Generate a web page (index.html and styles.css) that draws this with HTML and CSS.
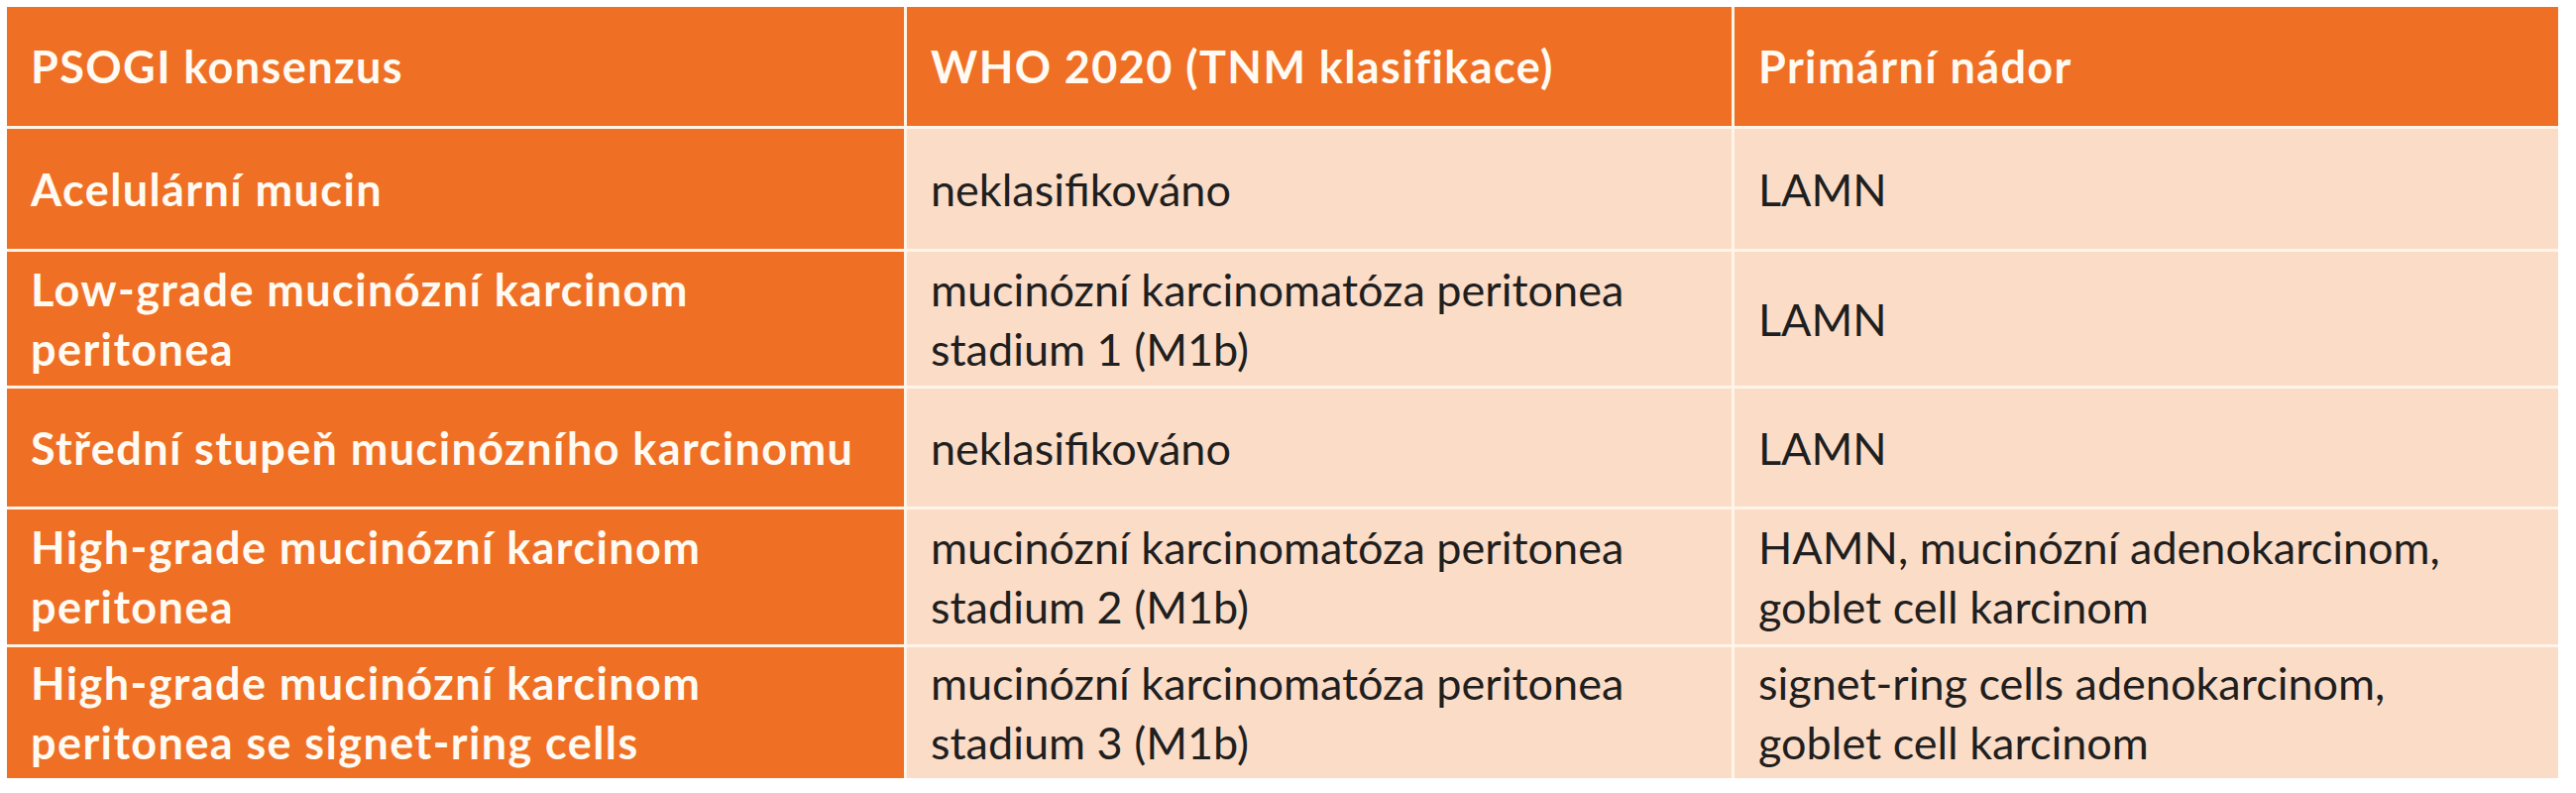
FILE: index.html
```html
<!DOCTYPE html>
<html lang="cs">
<head>
<meta charset="utf-8">
<title>PSOGI konsenzus</title>
<link rel="stylesheet" href="styles.css">
</head>
<body>
<div class="table">
  <div class="cell head">PSOGI konsenzus</div>
  <div class="cell head">WHO 2020 (TNM klasifikace)</div>
  <div class="cell head">Primární nádor</div>

  <div class="cell lead">Acelulární mucin</div>
  <div class="cell body">neklasifikováno</div>
  <div class="cell body">LAMN</div>

  <div class="cell lead">Low-grade mucinózní karcinom<br>peritonea</div>
  <div class="cell body">mucinózní karcinomatóza peritonea<br>stadium 1 (M1b)</div>
  <div class="cell body">LAMN</div>

  <div class="cell lead">Střední stupeň mucinózního karcinomu</div>
  <div class="cell body">neklasifikováno</div>
  <div class="cell body">LAMN</div>

  <div class="cell lead">High-grade mucinózní karcinom<br>peritonea</div>
  <div class="cell body">mucinózní karcinomatóza peritonea<br>stadium 2 (M1b)</div>
  <div class="cell body">HAMN, mucinózní adenokarcinom,<br>goblet cell karcinom</div>

  <div class="cell lead">High-grade mucinózní karcinom<br>peritonea se signet-ring cells</div>
  <div class="cell body">mucinózní karcinomatóza peritonea<br>stadium 3 (M1b)</div>
  <div class="cell body">signet-ring cells adenokarcinom,<br>goblet cell karcinom</div>
</div>
</body>
</html>
```
FILE: styles.css
```css
html, body {
  margin: 0;
  padding: 0;
  background: #ffffff;
}

body {
  padding: 7px 0 0 7px;
  font-family: "Lato", "Open Sans", sans-serif;
}

.table {
  display: grid;
  width: 2574px;
  grid-template-columns: 905px 832px 831px;
  grid-template-rows: 120px 121px 135px 119px 136px 132px;
  gap: 3px;
  background: #fff4e8;
}

.cell {
  display: flex;
  align-items: center;
  padding: 0 24px;
  font-size: 45px;
  line-height: 60px;
  white-space: nowrap;
}

.head,
.lead {
  background: #ef6f24;
  color: #fffaf2;
  font-weight: 700;
  letter-spacing: 1.4px;
}

.body {
  background: #fbdcc7;
  color: #1f1f1f;
  font-weight: 400;
}
```
